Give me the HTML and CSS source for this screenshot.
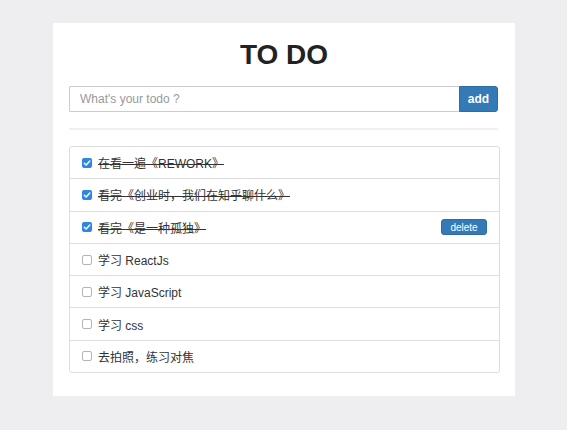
FILE: index.html
```html
<!DOCTYPE html>
<html>
<head>
<meta charset="utf-8">
<link rel="stylesheet" href="styles.css">
</head>
<body>
<div class="card">
  <h1 class="title">TO DO</h1>
  <div class="form">
    <input class="field" type="text" placeholder="What's your todo ?">
    <button class="add">add</button>
  </div>
  <hr class="rule">
  <ul class="list">
    <li class="item done"><span class="box on"><svg viewBox="0 0 10 10" width="10" height="10"><path d="M2.3 5.2 L4.2 7 L7.8 3" fill="none" stroke="#fff" stroke-width="1.5" stroke-linecap="round" stroke-linejoin="round"/></svg></span><span class="text">在看一遍《REWORK》</span></li>
    <li class="item done"><span class="box on"><svg viewBox="0 0 10 10" width="10" height="10"><path d="M2.3 5.2 L4.2 7 L7.8 3" fill="none" stroke="#fff" stroke-width="1.5" stroke-linecap="round" stroke-linejoin="round"/></svg></span><span class="text">看完《创业时，我们在知乎聊什么》</span></li>
    <li class="item done"><span class="box on"><svg viewBox="0 0 10 10" width="10" height="10"><path d="M2.3 5.2 L4.2 7 L7.8 3" fill="none" stroke="#fff" stroke-width="1.5" stroke-linecap="round" stroke-linejoin="round"/></svg></span><span class="text">看完《是一种孤独》</span><button class="delete">delete</button></li>
    <li class="item"><span class="box"></span><span class="text">学习 ReactJs</span></li>
    <li class="item"><span class="box"></span><span class="text">学习 JavaScript</span></li>
    <li class="item"><span class="box"></span><span class="text">学习 css</span></li>
    <li class="item"><span class="box"></span><span class="text">去拍照，练习对焦</span></li>
  </ul>
</div>
</body>
</html>
```
FILE: styles.css
```css
html, body {
  margin: 0;
  padding: 0;
  background: #eeedef;
}
body {
  font-family: "Liberation Sans", "Noto Sans CJK SC", sans-serif;
  color: #333;
  padding-top: 23px;
}
.card {
  margin-left: 53px;
  width: 462px;
  box-sizing: border-box;
  background: #fff;
  padding: 16px 16px 23px 16px;
}
.title {
  margin: 0;
  text-align: center;
  font-size: 28px;
  line-height: 31px;
  font-weight: bold;
  color: #222;
}
.form {
  display: flex;
  margin-top: 16px;
  height: 26px;
  margin-right: 1px;
}
.field {
  flex: 1;
  box-sizing: border-box;
  height: 26px;
  border: 1px solid #ccc;
  border-right: none;
  border-radius: 2px 0 0 2px;
  padding: 0 10px;
  font-family: "Liberation Sans", sans-serif;
  font-size: 12px;
  color: #555;
  outline: none;
}
.field::placeholder {
  color: #999;
}
.add {
  width: 39px;
  height: 26px;
  border: 1px solid #2e6da4;
  background: #337ab7;
  color: #fff;
  font-family: "Liberation Sans", sans-serif;
  font-weight: bold;
  font-size: 12px;
  border-radius: 0 3px 3px 0;
  padding: 0;
}
.rule {
  margin: 16px 0 0 0;
  border: 0;
  border-top: 2px solid #f0f0f0;
  margin-right: 1px;
}
.list {
  list-style: none;
  margin: 16px 0 0 0;
  padding: 0;
  border: 1px solid #ddd;
  border-radius: 3px;
  margin-right: -1px;
}
.item {
  display: flex;
  align-items: center;
  height: 31.3px;
  padding: 0 12px 0 12px;
  border-top: 1px solid #ddd;
  font-size: 12px;
}
.item:first-child {
  border-top: none;
}
.box {
  width: 10px;
  height: 10px;
  box-sizing: border-box;
  border: 1px solid #b5b5b5;
  border-radius: 2px;
  background: #fff;
  margin-right: 6px;
  display: flex;
  flex: none;
}
.box.on {
  border: none;
  background: #2f86de;
}
.box svg {
  display: block;
}
.text {
  flex: 1;
}
.done .text {
  text-decoration: line-through;
}
.delete {
  width: 46px;
  height: 16px;
  padding: 0;
  border: 1px solid #2e6da4;
  background: #337ab7;
  color: #fff;
  font-family: "Liberation Sans", sans-serif;
  font-size: 10px;
  border-radius: 3px;
}
```
